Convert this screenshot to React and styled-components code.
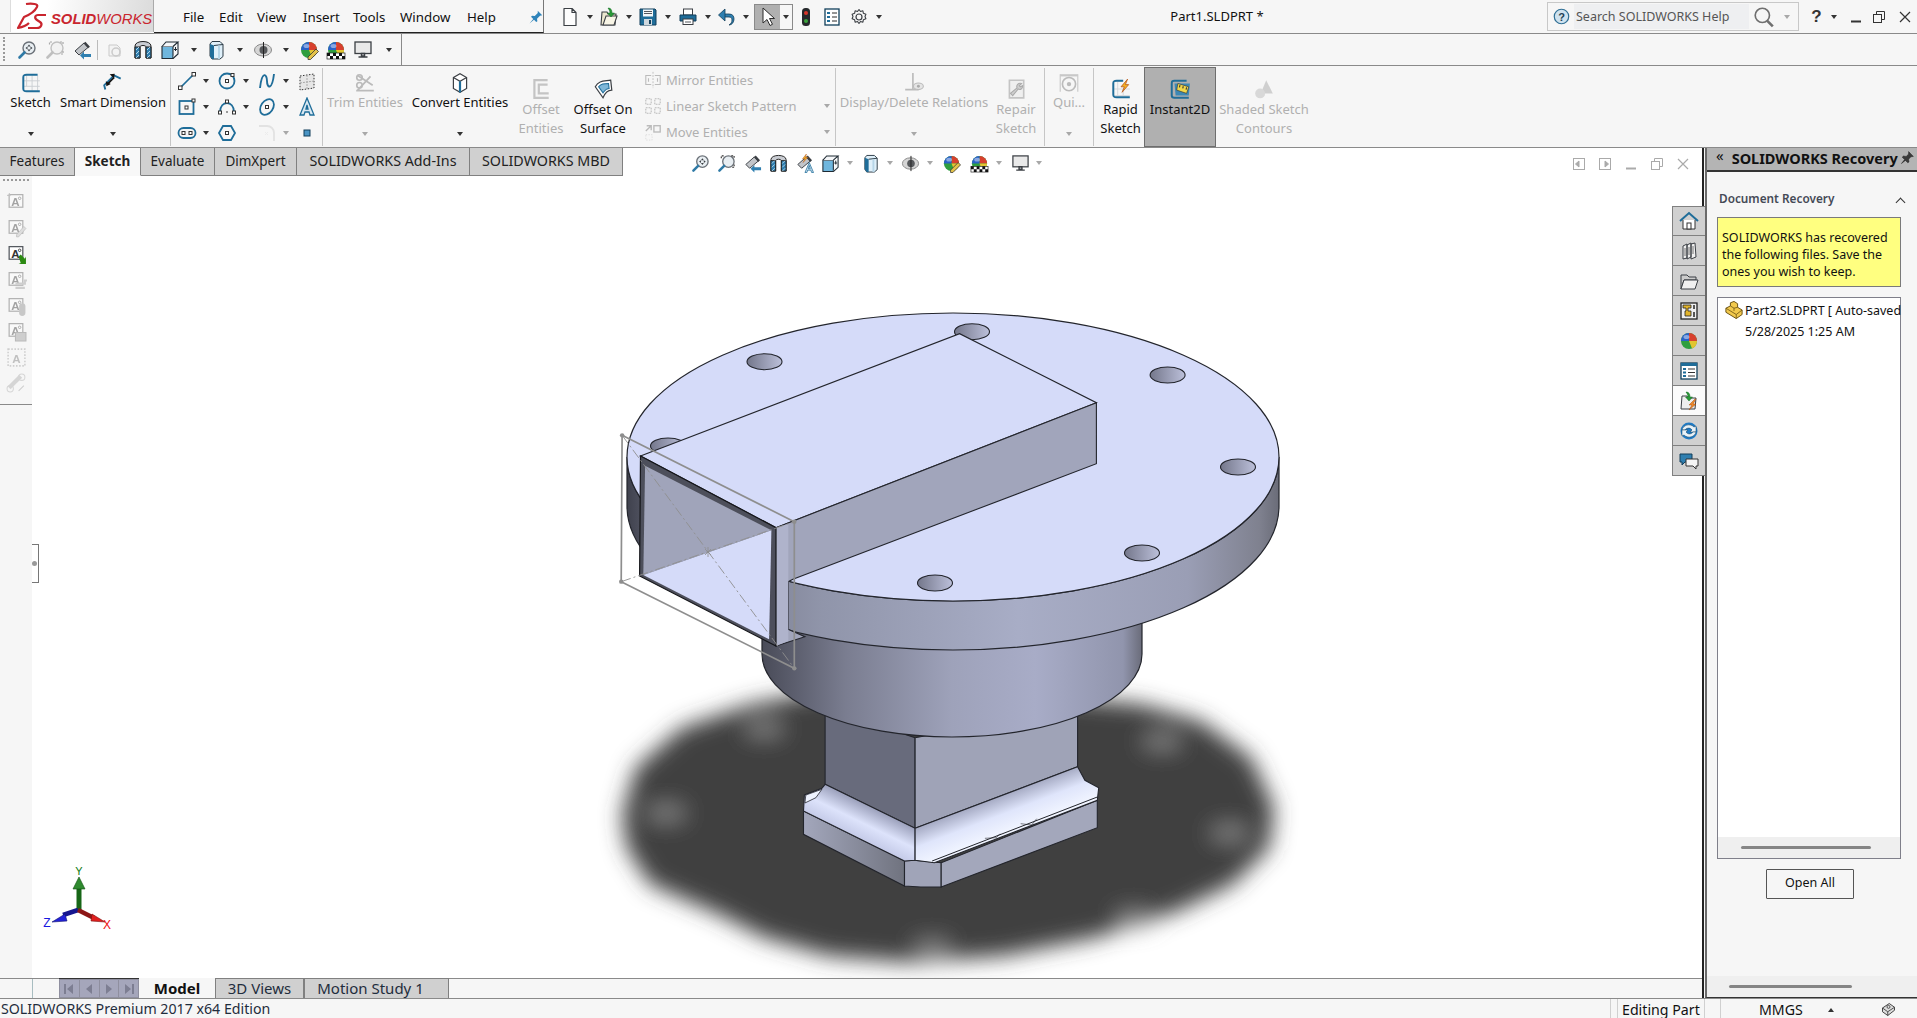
import React from 'react'
import styled, { createGlobalStyle } from 'styled-components'

const UI = '"Noto Sans", "Open Sans", sans-serif'

const Global = createGlobalStyle`
  html, body { margin: 0; padding: 0; background: #f6f6f6; }
  #root { width: 1917px; height: 1018px; overflow: hidden; }
`

const Shell = styled.div`
  width: 1917px;
  height: 1018px;
  display: flex;
  flex-direction: column;
  background: #f6f6f6;
  font-family: ${UI};
  font-size: 13px;
  color: #111;
  overflow: hidden;
`

/* ---------- icons ---------- */
const BL = '#1f6d99'

const Ic = ({ n, s = 20 }) => (
  <svg width={s} height={s} viewBox="0 0 20 20" fill="none" style={{ display: 'block' }}>
    {icons[n]}
  </svg>
)

const ball = (
  <>
    <circle cx="10" cy="10" r="8" fill="#2f9e3f" />
    <path d="M10 10V2a8 8 0 0 1 8 8z" fill="#d8402e" />
    <path d="M2 10a8 8 0 0 1 8-8v8z" fill="#2a62c8" />
    <path d="M10 10l8 0a8 8 0 0 1-5 7.400z" fill="#e2c430" />
    <ellipse cx="7.500" cy="6" rx="3" ry="2" fill="#fff" opacity=".45" />
  </>
)

const magnifier = (
  <>
    <circle cx="12" cy="8" r="6" fill="#e8eef2" stroke="#6b7178" strokeWidth="1.400" />
    <path d="M7.500 12.500L2.500 17.500" stroke="#2f7aa6" strokeWidth="2.600" strokeLinecap="round" />
  </>
)

const docA = (extra) => (
  <>
    <rect x="3" y="2.500" width="13" height="12" fill="#fff" stroke="#55595f" strokeWidth="1.200" />
    <text x="5" y="13" fontFamily="Liberation Sans, sans-serif" fontWeight="700" fontSize="11" fill="#333">A</text>
    <circle cx="13" cy="6" r="1.200" stroke="#333" strokeWidth=".8" />
    {extra}
  </>
)

const telescope = (
  <>
    <path d="M3 11L12 3l4 4.500-9 7.500z" fill="#c2c5c9" stroke="#3b3f44" />
    <path d="M12.500 2.500l4.500 5" stroke="#3b3f44" strokeWidth="2.500" />
  </>
)

const icons = {
  ball,
  newDoc: <path d="M4 1.500h8l4 4v13H4z M12 1.500v4h4" fill="#fdfdfd" stroke="#3b3f44" strokeWidth="1.200" strokeLinejoin="round" />,
  open: (
    <>
      <path d="M2 18l1-13h5l1 2h8l-1 11z" fill="#ece7cf" stroke="#3b3f44" strokeWidth="1.100" />
      <path d="M4 18l3-9h11l-3 9z" fill="#f8f5e6" stroke="#3b3f44" strokeWidth="1.100" />
      <path d="M9 1c3 0 4 2 4 5h2.500l-3.500 4-3.500-4H11c0-1.500-.6-3-2-5z" fill="#2a9a38" stroke="#136b22" strokeWidth=".5" />
    </>
  ),
  save: (
    <>
      <path d="M2 2h15l1 1v15H2z" fill="#1f6d99" stroke="#123f5b" />
      <rect x="5" y="2.500" width="10" height="7" fill="#f4f7f9" />
      <path d="M6 4.500h8M6 6.500h8" stroke="#55595f" />
      <rect x="6" y="12" width="8" height="6" fill="#cfd8de" />
      <rect x="11" y="13" width="2" height="4" fill="#123f5b" />
    </>
  ),
  print: (
    <>
      <rect x="5.500" y="2" width="9" height="6" fill="#fff" stroke="#3b3f44" />
      <path d="M2 8h16v6H2z" fill={BL} stroke="#123f5b" />
      <rect x="5" y="12" width="10" height="5.500" fill="#fff" stroke="#3b3f44" />
      <path d="M7 15h6" stroke="#55595f" />
    </>
  ),
  undo: (
    <>
      <path d="M7 7h5c3.500 0 5 2 5 5s-2 6-5 6c2-1 3-3 3-5s-1-3-3-3H7z" fill="#2f7fb0" stroke="#123f5b" strokeWidth=".8" />
      <path d="M8 2v12L1.500 8z" fill="#2f7fb0" stroke="#123f5b" strokeWidth=".8" />
    </>
  ),
  cursor: <path d="M5 1v15l4-3.500 3 6 2.500-1.200-3-5.800h5z" fill="#fff" stroke="#2b2b2b" strokeWidth="1" strokeLinejoin="round" />,
  light: (
    <>
      <rect x="6" y="1" width="8" height="18" rx="3.500" fill="#26292c" />
      <circle cx="10" cy="6" r="2" fill="#d8352a" />
      <circle cx="10" cy="14" r="2" fill="#3ba33c" />
    </>
  ),
  props: (
    <>
      <rect x="3" y="2" width="14" height="16" fill="#fff" stroke="#123f5b" strokeWidth="1.300" />
      <path d="M5 5h3v2H5zM5 9h3v2H5zM5 13h3v2H5z" fill={BL} />
      <path d="M10 6h5M10 10h5M10 14h5" stroke="#2b2b2b" />
    </>
  ),
  gear: (
    <>
      <circle cx="10" cy="10" r="3" stroke="#3b3f44" strokeWidth="1.200" />
      <path d="M10 2.500l1.500 2 2.400-.7.500 2.500 2.500.9-.9 2.300.9 2.300-2.500.9-.5 2.500-2.400-.7-1.500 2-1.500-2-2.400.7-.5-2.500-2.500-.9.900-2.300-.9-2.300 2.500-.9.500-2.500 2.400.7z" stroke="#3b3f44" strokeWidth="1.100" strokeLinejoin="round" />
    </>
  ),
  zoomFit: (
    <>
      {magnifier}
      <path d="M12 4.500l-1.500 2h3zM12 11.500l-1.500-2h3zM8.500 8l2-1.500v3zM15.500 8l-2-1.500v3z" fill="#3b3f44" />
    </>
  ),
  zoomArea: (
    <>
      {magnifier}
      <path d="M7 2H4.500v2.500M15 2h3v3M18 11v3h-3" stroke="#333" strokeWidth="1.200" strokeDasharray="2 1" />
    </>
  ),
  prevView: (
    <>
      {telescope}
      <path d="M19 14h-7v-2.500L8 15.500l4 4V17h7z" fill="#2f7fb0" />
    </>
  ),
  hudA: (
    <>
      {telescope}
      <path d="M12 0L8 5h2.500L8.500 9l5-5.500H11z" fill="#f4b223" stroke="#b5531a" strokeWidth=".5" />
      <path d="M15 9l-4.500 10.500h2l.8-2.500h3.400l.8 2.500h2zM14 15.500l1-3.500 1 3.500z" fill="#cfe4f1" stroke={BL} strokeWidth=".8" />
    </>
  ),
  rebuild: (
    <>
      <path d="M4 5h8l3 3v8H4z" fill="#eee" stroke="#888" />
      <circle cx="11" cy="12" r="4" stroke="#888" strokeWidth="1.500" />
    </>
  ),
  section: (
    <>
      <path d="M2 18V6c0-6 16-6 16 0v12h-5V7c0-2-6-2-6 0v11z" fill="#c9ccd2" stroke="#222" />
      <path d="M2 7h5v11H2zM13 7h5v11h-5z" fill="#2f7fb0" stroke="#222" />
      <path d="M3 10l3-3M3 14l3-3M3 18l3-3M14 10l3-3M14 14l3-3M14 18l3-3" stroke="#d5eaf6" strokeWidth=".8" />
    </>
  ),
  cubeArrows: (
    <>
      <path d="M2 6.500h11v12H2z" fill="#6fb6dd" stroke="#1f2a33" strokeWidth="1.100" />
      <path d="M2 6.500L6 2h12l-5 4.500M18 2v12l-5 4.500" fill="#f4f6f8" stroke="#1f2a33" strokeWidth="1.100" />
      <path d="M15.500 7v4M14 9.500h3" stroke="#1f2a33" />
    </>
  ),
  cube: (
    <>
      <path d="M5 1.500h8l3 3v12l-3 2.500H5l-2-3V4z" fill="#dff0fa" stroke="#2b3a45" strokeWidth="1" />
      <path d="M3 4l4 1.500V19H5l-2-3z" fill={BL} />
      <path d="M7 5.500L16 4.500" stroke="#2b3a45" />
      <path d="M12 5.500V19" stroke="#b6d6e8" strokeWidth="2" />
    </>
  ),
  eye: (
    <>
      <ellipse cx="10" cy="10" rx="8.500" ry="6" fill="#d5d5d5" stroke="#888" />
      <circle cx="10.500" cy="10" r="4" fill="#57595c" />
      <path d="M10.500 2v16" stroke="#222" />
    </>
  ),
  appearance: (
    <>
      {ball}
      <path d="M17 9l2.500 2.500-8 8H9v-2.500z" fill="#e5c34a" stroke="#333" strokeWidth=".8" />
    </>
  ),
  scene: (
    <>
      {ball}
      <rect x="1" y="13" width="18" height="6" fill="#fff" stroke="#222" strokeWidth=".7" />
      <path d="M1 13h3v3H1zM7 13h3v3H7zM13 13h3v3h-3zM4 16h3v3H4zM10 16h3v3h-3zM16 16h3v3h-3z" fill="#111" />
    </>
  ),
  monitor: (
    <>
      <rect x="2" y="2" width="16" height="11.500" fill="#e9e9e9" stroke="#3b3f44" strokeWidth="1.300" />
      <path d="M8.500 13.500h3V16h-3zM5.500 17h9" stroke="#3b3f44" strokeWidth="1.500" />
    </>
  ),
  sketch: (
    <>
      <path d="M6 3v10M11 3v14M16 3v14M3 8h15M3 13h15" stroke="#c9cdd2" strokeWidth=".8" />
      <path d="M16 2.500H6C3.500 2.500 3 3 3 5v10c0 2 .5 2.500 3 2.500h12" stroke={BL} strokeWidth="1.800" />
    </>
  ),
  smartDim: (
    <>
      <path d="M3 16l-1-4 9-9 6 3" stroke={BL} strokeWidth="1.700" />
      <path d="M5 11l6-6" stroke="#111" strokeWidth="1.600" />
      <path d="M11.500 2.500l-.5 4.500-4-4zM3.500 9.500l4.500 2.500-4 2z" fill="#111" transform="translate(0 -1)" />
    </>
  ),
  line: (
    <>
      <path d="M4 16L16 4" stroke={BL} strokeWidth="1.700" />
      <rect x="1.500" y="15" width="3.500" height="3.500" fill="#fff" stroke="#333" />
      <rect x="15" y="1.500" width="3.500" height="3.500" fill="#fff" stroke="#333" />
    </>
  ),
  circle: (
    <>
      <circle cx="10" cy="10" r="7.500" stroke={BL} strokeWidth="1.800" />
      <rect x="8.500" y="8.500" width="3" height="3" fill="#fff" stroke="#333" />
      <rect x="14" y="2.500" width="3" height="3" fill="#fff" stroke="#333" />
    </>
  ),
  spline: <path d="M3 17c2-18 7-14 7-7s5 10 7-7" stroke={BL} strokeWidth="1.900" />,
  dashBox: (
    <>
      <path d="M3 5l14-2v14l-14 2z" fill="#e6e6e6" stroke="#333" strokeDasharray="1.500 1.500" />
      <path d="M10 4v14M3 12l14-2" stroke="#aaa" strokeDasharray="2 1" />
    </>
  ),
  rect: (
    <>
      <rect x="2.500" y="4" width="14" height="13" stroke={BL} strokeWidth="1.800" />
      <rect x="8" y="9" width="3" height="3" fill="#fff" stroke="#333" />
      <rect x="15" y="2" width="3" height="3" fill="#fff" stroke="#333" />
    </>
  ),
  arc: (
    <>
      <path d="M3 15c0-12 14-12 14 0" stroke={BL} strokeWidth="1.800" />
      <rect x="8.500" y="3" width="3" height="3" fill="#fff" stroke="#333" />
      <rect x="1.500" y="14" width="3" height="3" fill="#fff" stroke="#333" />
      <rect x="15.500" y="14" width="3" height="3" fill="#fff" stroke="#333" />
      <path d="M9 14l2 2M11 14l-2 2" stroke="#999" />
    </>
  ),
  ellipse: (
    <>
      <ellipse cx="10" cy="10" rx="6" ry="8.500" transform="rotate(35 10 10)" stroke={BL} strokeWidth="1.800" />
      <rect x="8.500" y="8.500" width="3" height="3" fill="#fff" stroke="#333" />
    </>
  ),
  textA: <path d="M10 1L3 18h4l1-3h4l1 3h4zM9 12l1-4 1 4z" fill="#d9e8f2" stroke={BL} strokeWidth="1.300" />,
  slot: (
    <>
      <rect x="1.500" y="5" width="17" height="10" rx="5" stroke={BL} strokeWidth="1.800" />
      <rect x="5" y="8.500" width="3" height="3" fill="#fff" stroke="#333" />
      <rect x="12" y="8.500" width="3" height="3" fill="#fff" stroke="#333" />
    </>
  ),
  polygon: (
    <>
      <path d="M6 3h8l4 7-4 7H6l-4-7z" stroke={BL} strokeWidth="1.800" />
      <rect x="8.500" y="8.500" width="3" height="3" fill="#fff" stroke="#333" />
    </>
  ),
  fillet: (
    <>
      <path d="M2 3h8c4 0 7 3 7 7v8" stroke="#c4c4c4" strokeWidth="1.800" />
      <path d="M8 9l3 3M11 9l-3 3" stroke="#ddd" />
    </>
  ),
  point: <rect x="7" y="7" width="6" height="6" fill="#4a94c4" stroke="#123f5b" />,
  trim: (
    <>
      <path d="M3 3l14 9M3 17L15 4M2 17h16" stroke="#bbb" strokeWidth="1.600" />
      <circle cx="5" cy="5" r="2.500" stroke="#bbb" strokeWidth="1.500" />
      <circle cx="5" cy="12" r="2.500" stroke="#bbb" strokeWidth="1.500" />
    </>
  ),
  convert: (
    <>
      <path d="M4 5l6-3.500L16 5v10l-6 3.500L4 15z" fill="#fff" stroke="#3b3f44" strokeWidth="1.100" />
      <path d="M4 5l6 3.500L16 5M10 8.500v10" stroke="#3b3f44" strokeWidth="1.100" />
      <path d="M10 8.500v10" stroke={BL} strokeWidth="2" />
    </>
  ),
  offset: <path d="M16 2H4v16h13M16 6H8v8h9" stroke="#c4c4c4" strokeWidth="2" />,
  offsetSurface: (
    <>
      <path d="M3 8c3-6 8-5 14-6l1 9c-4 0-6 2-8 7z" fill="#fff" stroke="#3b3f44" strokeWidth="1.100" />
      <path d="M6 8c2-3 5-3 9-3l.500 4.500c-3 0-4 2-5.500 4z" fill="#7fb7d8" stroke={BL} />
    </>
  ),
  mirror: (
    <>
      <path d="M10 1v18" stroke="#bbb" strokeDasharray="2 1.500" />
      <path d="M8 5H2v10h6M12 5h6v10h-6M5 8v4M15 8v4" stroke="#bbb" strokeWidth="1.200" />
    </>
  ),
  linear: <path d="M2 2h6v6H2zM12 2h6v6h-6zM2 12h6v6H2zM12 12h6v6h-6z" stroke="#bbb" strokeWidth="1.200" strokeDasharray="2 1" />,
  move: (
    <>
      <path d="M2 9l6-6M3 3h5v5" stroke="#bbb" strokeWidth="1.500" />
      <rect x="11" y="3" width="7" height="7" stroke="#bbb" strokeWidth="1.500" />
      <path d="M2 13h7v6H2z" stroke="#ddd" strokeDasharray="1.500 1.500" />
    </>
  ),
  relations: (
    <>
      <path d="M9 1v15M2 16h12" stroke="#bbb" strokeWidth="1.500" />
      <ellipse cx="14" cy="13" rx="4.500" ry="3" fill="#e5e5e5" stroke="#bbb" />
      <circle cx="14" cy="13" r="1.300" fill="#aaa" />
    </>
  ),
  repair: (
    <>
      <path d="M4 2h13v16H4z" fill="#efefef" stroke="#c4c4c4" strokeWidth="1.500" />
      <path d="M15 5l-2 2 1 1 2-1c0 3-2 4-4 3l-5 6-2-2 6-5c-1-2 1-5 4-4z" fill="#cfcfcf" stroke="#aaa" />
    </>
  ),
  quick: (
    <>
      <path d="M2 2h16v2H2z" fill="#c8c8c8" />
      <path d="M2 2v16M18 2v16" stroke="#c8c8c8" />
      <circle cx="10" cy="11" r="6" stroke="#bbb" strokeWidth="1.500" />
      <circle cx="10" cy="11" r="2" fill="#bbb" />
    </>
  ),
  rapid: (
    <>
      <path d="M3 3v13h15M3 3h8M7 3v13M12 10v6M3 10h15" stroke="#d0d4d8" strokeWidth=".8" />
      <path d="M12 2.500H6C3.500 2.500 3 3 3 5v10c0 2 .5 2.500 3 2.500h12" stroke={BL} strokeWidth="1.800" />
      <path d="M16 1l-6 7h3l-2 5 6-7h-3z" fill="#f4b223" stroke="#b5531a" strokeWidth=".7" />
    </>
  ),
  instant: (
    <>
      <path d="M16 2.500H5C3 2.500 2.500 3 2.500 5v11c0 1.500.5 2 2.500 2h13" stroke={BL} strokeWidth="1.800" />
      <path d="M5 5h14l-1 11H6z" fill="#3d88b5" />
      <path d="M8 5l10 3-2 6-9-3z" fill="#f2d84a" stroke="#333" strokeWidth=".6" />
      <path d="M10 6.500l-.5 2M13 7.500l-.5 2M16 8.500l-.5 2" stroke="#333" />
    </>
  ),
  shaded: (
    <>
      <path d="M12 2l6 12H7z" fill="#cfcfcf" />
      <circle cx="6.500" cy="14" r="4.500" fill="#d8d8d8" />
    </>
  ),
  pin: <path d="M13 1l6 6-3 .5-4 4 .5 3.500-1.500 1-3-3-6 5 5-6-3-3 1.500-1.500 3.500.5 4-4z" fill="#2f84ba" />,
  blackPin: <path d="M12 2l6 6-3 .5-3 3 .5 3.500-1.500 1-3-3-5 4 4-5-3-3 1.500-1.500 3.500.5 3-3z" fill="#3a3a3a" stroke="#111" strokeWidth=".5" />,
  helpCircle: (
    <>
      <circle cx="10" cy="10" r="8.500" fill="#cfe2ee" stroke="#2f6f95" strokeWidth="1.400" />
      <text x="10" y="15" textAnchor="middle" fontFamily="Liberation Sans, sans-serif" fontWeight="700" fontSize="13" fill="#1f3f55">?</text>
    </>
  ),
  bigSearch: (
    <>
      <circle cx="8.500" cy="8.500" r="6.500" stroke="#6f6f6f" strokeWidth="1.500" />
      <path d="M13 13.500l5 5" stroke="#6f6f6f" strokeWidth="2.400" />
    </>
  ),
  part: (
    <>
      <path d="M1 8l5-2.500V2l4-1.500L14 3v4l5 3v5l-6.500 4.500L1 12.500z" fill="#f2c94c" stroke="#6d5414" strokeWidth="1.100" strokeLinejoin="round" />
      <path d="M6 5.500L10 8l4-1M1 8l11.500 7v4.500M12.500 15L19 10M10 8v3" stroke="#6d5414" strokeWidth=".9" />
    </>
  ),
  stamp: (
    <>
      <path d="M2 8l9-6 7 5v4l-9 7-7-5z" fill="#ddd" stroke="#333" strokeWidth="1.200" />
      <path d="M2 8l7 5 9-6M9 13v5" stroke="#333" strokeWidth="1.100" />
      <circle cx="10" cy="6.500" r="2" stroke="#333" />
    </>
  ),
  home: (
    <>
      <path d="M1 10l9-8 9 8" stroke="#1f6d99" strokeWidth="2" />
      <path d="M4 9v9h12V9" fill="#fff" stroke="#333" />
      <rect x="8" y="12" width="4" height="6" fill="#fff" stroke="#333" />
    </>
  ),
  books: (
    <>
      <path d="M4 5l4-2v14l-4 1zM8 4l4-2v14l-4 2zM12 3l4-1 1 14-5 2z" fill="#efefef" stroke="#3b3f44" />
      <path d="M6 7v8M10 6v8M14 5v8" stroke="#777" />
    </>
  ),
  folder: (
    <>
      <path d="M2 4h6l2 2h7v3H5L2 18z" fill="#ccc" stroke="#3b3f44" />
      <path d="M2 18l3-9h14l-3 9z" fill="#f0f0f0" stroke="#3b3f44" />
    </>
  ),
  layout: (
    <>
      <rect x="2" y="2" width="16" height="16" fill="#efefef" stroke="#222" strokeWidth="1.300" />
      <path d="M4 4h8v3H9v3h3v5H6v-5h1V7H4z" fill="#e2b42b" stroke="#222" strokeWidth=".8" />
      <path d="M14 4h2v4h-2zM14 11h2v5h-2z" fill="#555" />
    </>
  ),
  list: (
    <>
      <rect x="2" y="2" width="16" height="16" fill="#fff" stroke="#123f5b" strokeWidth="1.300" />
      <path d="M2 2h16v3H2z" fill={BL} />
      <path d="M4 7h3v2H4zM4 10.500h3v2H4zM4 14h3v2H4z" fill={BL} />
      <path d="M9 8h7M9 11.500h7M9 15h7" stroke="#333" />
    </>
  ),
  recover: (
    <>
      <path d="M2 18l1-13h5l1 2h8l-1 11z" fill="#eee" stroke="#3b3f44" />
      <path d="M7 1c3 0 4 2 4 5h2.500l-3.500 4-3.500-4H9c0-1.500-.6-3-2-5z" fill="#2a9a38" stroke="#136b22" strokeWidth=".5" />
      <path d="M16 8l-6 6h3l-3 5 7-6h-3l3-5z" fill="#f08b2a" stroke="#a34a10" strokeWidth=".5" />
    </>
  ),
  sync: (
    <>
      <circle cx="10" cy="10" r="8.500" fill="#1f7ac4" />
      <path d="M3 9c1-5 8-7 12-3l2-1v6h-6l2-2c-2-3-6-2-7 0z" fill="#e9f2f8" stroke="#123f5b" strokeWidth=".5" />
      <path d="M17 11c-1 5-8 7-12 3l-2 1V9h6l-2 2c2 3 6 2 7 0z" fill="#e9f2f8" stroke="#123f5b" strokeWidth=".5" />
    </>
  ),
  chat: (
    <>
      <path d="M1 3h12v8H6l-3 3v-3H1z" fill="#2f7fb0" stroke="#123f5b" />
      <path d="M7 8h12v7h-2v3l-3-3H7z" fill="#f4f4f4" stroke="#333" />
    </>
  ),
  annNew: docA(<path d="M3 1l1 3M1 3l3 .5" stroke="#777" />),
  annEdit: docA(<path d="M17 8l2 2-7 8h-2v-2z" fill="#bbb" stroke="#666" strokeWidth=".6" />),
  annImport: docA(<path d="M12 12l2-2 4 4 1-2v7h-7l2-1z" fill="#2c8a12" />),
  annAdd: docA(<path d="M9 13h9v-3h3M9 17h9" stroke="#999" strokeWidth="2" />),
  annLight: docA(<rect x="12.500" y="7" width="6" height="12" rx="3" fill="#888" />),
  annSave: docA(<path d="M9 11h10v8H9z" fill="#999" stroke="#666" />),
  annFrame: (
    <>
      <rect x="2" y="2" width="16" height="16" stroke="#999" strokeDasharray="1.500 1.500" strokeWidth="1.500" />
      <text x="6" y="15" fontFamily="Liberation Sans, sans-serif" fontWeight="700" fontSize="11" fill="#777">A</text>
    </>
  ),
  annLink: (
    <>
      <path d="M3 14L14 3" stroke="#aaa" strokeWidth="4" />
      <circle cx="4" cy="15" r="3" stroke="#aaa" />
      <circle cx="15" cy="4" r="3" stroke="#aaa" />
      <path d="M12 17l5-5" stroke="#999" />
    </>
  ),
}

/* ---------- shared small bits ---------- */
const IconSlot = styled.span`
  width: ${(p) => p.$w || 26}px;
  flex: none;
  display: flex;
  justify-content: center;
  align-items: center;
  ${(p) => p.$off && 'filter: grayscale(1) opacity(.4);'}
`

const Caret = styled.span`
  width: ${(p) => p.$w || 14}px;
  flex: none;
  display: flex;
  justify-content: center;
  &::after {
    content: '';
    border-left: 3.500px solid transparent;
    border-right: 3.500px solid transparent;
    border-top: 4px solid ${(p) => (p.$off ? '#a8a8a8' : '#333')};
  }
`

/* ---------- title bar ---------- */
const TitleBar = styled.header`
  height: 33px;
  flex: none;
  display: flex;
  border-bottom: 1px solid #8a8a8a;
`

const LogoBox = styled.div`
  width: 144px;
  height: 32px;
  margin-left: 10px;
  flex: none;
  display: flex;
  align-items: center;
  box-sizing: border-box;
  border-left: 1px solid #ddd;
  border-right: 1px solid #aaa;
  background: linear-gradient(100deg, #fff 25%, #dadada 100%);
`

const LogoWord = styled.span`
  font-family: "Liberation Sans", Arial, sans-serif;
  font-style: italic;
  font-size: 14.800px;
  color: #c9252e;
  margin: 5px 0 0 5px;
  white-space: nowrap;
  b { font-weight: 700; }
`

const MenuBar = styled.nav`
  width: 390px;
  box-sizing: border-box;
  flex: none;
  height: 33px;
  margin-bottom: -1px;
  padding-top: 2px;
  display: flex;
  align-items: center;
  border-bottom: 1px solid #222;
  border-right: 1px solid #777;
`

const MenuItem = styled.span`
  width: ${(p) => p.$w}px;
  font-size: 13.300px;
  color: #111;
  flex: none;
`

const QuickBar = styled.div`
  display: flex;
  align-items: center;
  padding-left: 16px;
  flex: none;
`

const SelectBox = styled.div`
  display: flex;
  height: 26px;
  margin: 0 2px 0 0;
  border: 1px solid #8a8a8a;
  box-sizing: border-box;
`

const SelectOn = styled.div`
  width: 25px;
  background: #b0b0b0;
  display: flex;
  align-items: center;
  justify-content: center;
`

const SelectCaret = styled(Caret)`
  align-self: center;
`

const DocTitle = styled.div`
  flex: 1;
  text-align: center;
  font-size: 13px;
  line-height: 33px;
`

const SearchBox = styled.div`
  width: 252px;
  height: 29px;
  margin-top: 2px;
  box-sizing: border-box;
  border: 1px solid #c8c8c8;
  display: flex;
  align-items: center;
  flex: none;
`

const SearchInput = styled.div`
  width: 175px;
  height: 25px;
  background: #eeeff1;
  color: #555;
  font-size: 12.500px;
  line-height: 25px;
  padding-left: 2px;
  box-sizing: border-box;
  white-space: nowrap;
`

const WinControls = styled.div`
  display: flex;
  align-items: center;
  width: 118px;
  flex: none;
  padding-left: 12px;
  box-sizing: border-box;
`

const WinGlyph = styled.span`
  width: ${(p) => p.$w || 26}px;
  flex: none;
  text-align: center;
  color: #333;
  font-family: "Liberation Sans", sans-serif;
  font-size: 17px;
  font-weight: 700;
`

const WinIcon = ({ kind, c = '#333', w = 26 }) => (
  <IconSlot $w={w}>
    <svg width="14" height="14" viewBox="0 0 14 14" fill="none" stroke={c}>
      {kind === 'min' && <path d="M2 11.500h10" strokeWidth="2" />}
      {kind === 'max' && (
        <>
          <rect x="1.500" y="4.500" width="8" height="8" />
          <path d="M4.500 4V1.500h8v8H10" />
        </>
      )}
      {kind === 'x' && <path d="M2 2l10 10M12 2L2 12" strokeWidth="1.200" />}
      {kind === 'prev' && (
        <>
          <rect x="1.500" y="1.500" width="11" height="11" />
          <path d="M7 4v6L3.500 7z" fill={c} />
        </>
      )}
      {kind === 'next' && (
        <>
          <rect x="1.500" y="1.500" width="11" height="11" />
          <path d="M7 4v6l3.500-3z" fill={c} />
        </>
      )}
    </svg>
  </IconSlot>
)

/* ---------- view toolbar ---------- */
const ViewBar = styled.div`
  height: 31px;
  flex: none;
  display: flex;
  border-bottom: 1px solid #8a8a8a;
`

const ViewTools = styled.div`
  width: 402px;
  flex: none;
  display: flex;
  align-items: center;
  box-sizing: border-box;
  padding-left: 13px;
  border-right: 1px solid #8a8a8a;
`

const ToolSep = styled.span`
  width: 1px;
  height: 20px;
  background: #bbb;
  flex: none;
  margin: 0 3px;
`

const Grip = styled.span`
  position: absolute;
  left: 3px;
  top: 37px;
  height: 24px;
  border-left: 2px dotted #999;
`

/* ---------- ribbon ---------- */
const Ribbon = styled.div`
  height: 81px;
  flex: none;
  display: flex;
  border-bottom: 1px solid #8a8a8a;
  padding-left: 3px;
`

const Cmd = styled.div`
  width: ${(p) => p.$w}px;
  flex: none;
  height: 78px;
  margin-top: 2px;
  box-sizing: border-box;
  display: flex;
  flex-direction: column;
  align-items: center;
  position: relative;
  color: ${(p) => (p.$off ? '#b0b0b0' : '#111')};
  background: ${(p) => (p.$on ? '#b0b0b0' : 'transparent')};
  outline: ${(p) => (p.$on ? '1px solid #6e6e6e' : 'none')};
  font-size: 13px;
  line-height: 19px;
  text-align: center;
  white-space: nowrap;
`

const CmdIcon = styled.div`
  margin-top: ${(p) => (p.$two ? 10 : 4)}px;
  height: 22px;
`

const CmdLabel = styled.div`
  margin-top: ${(p) => (p.$two ? 0 : -1)}px;
`

const CmdCaret = styled(Caret)`
  position: absolute;
  bottom: 10px;
  left: 50%;
  margin-left: -7px;
`

const RibbonSep = styled.span`
  width: 1px;
  height: 78px;
  margin: 2px 2px 0;
  flex: none;
  background: #c6c6c6;
`

const ToolGrid = styled.div`
  display: grid;
  grid-template-columns: 40px 40px 40px 23px;
  grid-auto-rows: 26px;
  flex: none;
  margin: 2px 0 0 4px;
`

const GridCell = styled.div`
  display: flex;
  align-items: center;
`

const SmallList = styled.div`
  width: 193px;
  flex: none;
  margin: 1px 0 0 1px;
  color: #b0b0b0;
`

const SmallRow = styled.div`
  height: 26px;
  display: flex;
  align-items: center;
  white-space: nowrap;
  font-size: 13px;
`

const RowIcon = styled.span`
  width: 26px;
  flex: none;
  display: flex;
  justify-content: center;
`

const RowText = styled.span`
  flex: 1;
`

const Cmd2 = ({ w, icon, lines, off, on, caret, two }) => (
  <Cmd $w={w} $off={off} $on={on}>
    <CmdIcon $two={two}>
      <Ic n={icon} s={22} />
    </CmdIcon>
    {lines.map((l) => (
      <CmdLabel key={l} $two={two}>{l}</CmdLabel>
    ))}
    {caret && <CmdCaret $off={off} />}
  </Cmd>
)

/* ---------- main area ---------- */
const Main = styled.div`
  flex: 1;
  display: flex;
  min-height: 0;
`

const Work = styled.div`
  flex: 1;
  min-width: 0;
  display: flex;
  flex-direction: column;
`

const TabRow = styled.div`
  height: 28px;
  flex: none;
  display: flex;
  background: #fff;
`

const CmTab = styled.div`
  width: ${(p) => p.$w}px;
  box-sizing: border-box;
  flex: none;
  text-align: center;
  font-size: ${(p) => (p.$caps ? 14.300 : 13.500)}px;
  line-height: 26px;
  color: #222;
  white-space: nowrap;
  background: ${(p) => (p.$on ? '#f8f8f8' : '#d0d0d0')};
  font-weight: ${(p) => (p.$on ? 700 : 400)};
  border-right: 1px solid #808080;
  border-bottom: ${(p) => (p.$on ? '1px solid #f8f8f8' : '1px solid #808080')};
`

const Hud = styled.div`
  display: flex;
  align-items: center;
  margin-left: 64px;
  padding-top: 2px;
`

const DocControls = styled.div`
  margin-left: auto;
  margin-right: 6px;
  padding-top: 4px;
  display: flex;
  align-items: center;
`

const ViewRow = styled.div`
  flex: 1;
  min-height: 0;
  display: flex;
`

const FeatureRail = styled.aside`
  width: 32px;
  flex: none;
  background: #f6f6f6;
  position: relative;
`

const RailGrip = styled.div`
  height: 9px;
  margin: 0 3px;
  border-top: 2px dotted #999;
  transform: translateY(3px);
`

const RailTools = styled.div`
  height: 218px;
  padding-top: 3px;
  box-sizing: border-box;
  display: flex;
  flex-direction: column;
  align-items: center;
  gap: .9px;
  border-bottom: 1px solid #8a8a8a;
`

const RailIcon = styled.div`
  height: 25px;
  display: flex;
  align-items: center;
  ${(p) => !p.$on && 'opacity: .42; filter: grayscale(1);'}
`

const Handle = styled.div`
  position: absolute;
  left: 32px;
  top: 368px;
  width: 7px;
  height: 39px;
  box-sizing: border-box;
  border: 1px solid #777;
  border-left: none;
  background: #fff;
  z-index: 2;
  &::after {
    content: '';
    position: absolute;
    top: 16px;
    left: 0;
    width: 5px;
    height: 5px;
    border-radius: 50%;
    background: #999;
  }
`

const Viewport = styled.div`
  flex: 1;
  min-width: 0;
  position: relative;
  background: #fff;
`

const Canvas = styled.svg`
  position: absolute;
  left: 0;
  top: 0;
  display: block;
`

const PaneTabs = styled.div`
  position: absolute;
  right: -3px;
  top: 30px;
  width: 33px;
  display: flex;
  flex-direction: column;
  z-index: 2;
`

const PaneTab = styled.div`
  height: 30px;
  box-sizing: border-box;
  display: flex;
  align-items: center;
  justify-content: center;
  background: ${(p) => (p.$on ? '#fbfbfb' : '#d0d0d0')};
  border: 1px solid #808080;
  border-right: none;
  border-top: ${(p) => (p.$first ? '1px solid #808080' : 'none')};
`

const BottomTabs = styled.div`
  height: 19px;
  flex: none;
  display: flex;
  background: #f6f6f6;
  border-top: 1px solid #8a8a8a;
  padding-left: 59px;
  position: relative;
  &::before {
    content: '';
    position: absolute;
    left: 32px;
    top: 0;
    bottom: 0;
    width: 1px;
    background: #a7bcc0;
  }
`

const NavButtons = styled.div`
  width: 80px;
  flex: none;
  display: flex;
  gap: 1px;
  padding: 1px;
  box-sizing: border-box;
  background: #8f8f9f;
  margin-top: -1px;
  height: 20px;
  border-top: 1px solid #333;
`

const NavButton = styled.span`
  flex: 1;
  background: #a5a6bb;
  display: flex;
  align-items: center;
  justify-content: center;
`

const NavGlyph = ({ d }) => (
  <svg width="10" height="12" viewBox="0 0 10 12" fill="#7d7e92">
    <path d={d} />
  </svg>
)

const ModelTab = styled.div`
  width: ${(p) => p.$w}px;
  flex: none;
  box-sizing: border-box;
  text-align: center;
  font-size: 15px;
  line-height: 19px;
  margin-top: -1px;
  height: 20px;
  padding-right: ${(p) => p.$shift || 0}px;
  white-space: nowrap;
  color: ${(p) => (p.$on ? '#111' : '#1f2d3d')};
  font-weight: ${(p) => (p.$on ? 700 : 400)};
  background: ${(p) => (p.$on ? '#f6f6f6' : '#d0d0d0')};
  border-right: ${(p) => (p.$on ? 'none' : '1px solid #808080')};
  border-left: ${(p) => (p.$on ? 'none' : '1px solid #808080')};
  border-top: ${(p) => (p.$on ? '1px solid #f6f6f6' : '1px solid #808080')};
`

/* ---------- recovery panel ---------- */
const Panel = styled.aside`
  width: 215px;
  flex: none;
  box-sizing: border-box;
  display: flex;
  flex-direction: column;
  border-left: 2px solid #222;
  background: #f6f6f6;
  position: relative;
`

const PanelInner = styled.div`
  flex: 1;
  min-height: 0;
  margin-left: 1px;
  border-left: 2px solid #6a6a6a;
  border-bottom: 1px solid #333;
  display: flex;
  flex-direction: column;
`

const PanelHead = styled.div`
  height: 24px;
  box-sizing: border-box;
  flex: none;
  display: flex;
  align-items: center;
  background: #b4b4b4;
  border-bottom: 2px solid #333;
  font-size: 14.500px;
  line-height: 19px;
  font-weight: 700;
  color: #111;
  padding: 0 0 2px 9px;
  white-space: nowrap;
`

const PanelChevrons = styled.span`
  font-size: 15px;
  font-weight: 400;
  margin-right: 8px;
  line-height: 15px;
  margin-top: -6px;
`

const SectionHead = styled.div`
  margin: 18px 10px 0 12px;
  height: 16px;
  display: flex;
  justify-content: space-between;
  align-items: center;
  font-size: 11.800px;
  font-weight: 600;
  color: #454a56;
`

const Chevron = styled.span`
  width: 6px;
  height: 6px;
  border-left: 1.500px solid #333;
  border-top: 1.500px solid #333;
  transform: rotate(45deg);
  margin: 8px 3px 0 0;
`

const Notice = styled.div`
  margin: 11px 16px 0 10px;
  height: 70px;
  box-sizing: border-box;
  padding: 11px 0 0 4px;
  background: #ffff80;
  border: 1px solid #7a7a7a;
  font-size: 12.500px;
  line-height: 17px;
  color: #111;
  white-space: nowrap;
`

const FileList = styled.div`
  margin: 10px 16px 0 10px;
  height: 562px;
  flex: none;
  box-sizing: border-box;
  background: #fff;
  border: 1px solid #7f7f8a;
  display: flex;
  flex-direction: column;
`

const FileRow = styled.div`
  display: flex;
  align-items: center;
  height: 24px;
  font-size: 12.500px;
  white-space: nowrap;
  padding-left: 5px;
`

const FileDate = styled.div`
  font-size: 12.500px;
  padding-left: 27px;
  line-height: 21px;
  margin-top: -1px;
  flex: 1;
`

const HScroll = styled.div`
  height: 21px;
  flex: none;
  background: #efefef;
  display: flex;
  align-items: center;
  padding-left: ${(p) => p.$pad}px;
  &::after {
    content: '';
    width: ${(p) => p.$thumb}px;
    height: 3px;
    border-radius: 2px;
    background: #858585;
  }
`

const OpenAll = styled.div`
  width: 88px;
  height: 30px;
  margin: 10px 0 0 59px;
  flex: none;
  box-sizing: border-box;
  border: 1px solid #555;
  border-radius: 1px;
  text-align: center;
  font-size: 12.500px;
  line-height: 25px;
`

const PanelFill = styled.div`
  flex: 1;
`

/* ---------- status bar ---------- */
const StatusBar = styled.footer`
  height: 20px;
  flex: none;
  display: flex;
  background: #f6f6f6;
  border-top: 1px solid #8a8a8a;
  box-sizing: border-box;
  font-size: 14.200px;
  line-height: 15px;
  white-space: nowrap;
`

const StatusText = styled.span`
  flex: 1;
  padding: 2px 0 0 1px;
  color: #1f2d3d;
`

const StatusCell = styled.span`
  width: ${(p) => p.$w}px;
  flex: none;
  box-sizing: border-box;
  border-left: 1px solid #d0d0d0;
  padding: 2px 0 0 ${(p) => p.$pad || 0}px;
  display: flex;
  align-items: center;
`

const UpCaret = styled(Caret)`
  transform: rotate(180deg);
`

const StatusIcon = styled(IconSlot)`
  margin-left: 16px;
`

/* ---------- the model, drawn in screen coordinates ---------- */
const z5 = (pts) => pts.map(([x, y]) => `${(590 + x / 2.178).toFixed(1)},${(300 + y / 3).toFixed(1)}`).join(' ')
const z6 = (pts) => pts.map(([x, y]) => `${(590 + x / 2.178).toFixed(1)},${(640 + y / 3).toFixed(1)}`).join(' ')

const holes = [
  [764.5, 360.7],
  [972, 330.7],
  [1167.6, 374],
  [1238, 466],
  [1142, 552],
  [935, 582],
  [668, 445],
]

const spots = [
  [764, 727],
  [1162, 740],
  [666, 812],
  [1230, 832],
  [1134, 917],
  [932, 947],
]

const shadowShape = [
  [70, 520], [100, 380], [200, 260], [350, 190], [500, 150], [900, 150], [1200, 190], [1330, 240],
  [1440, 350], [1490, 500], [1480, 620], [1400, 730], [1280, 810], [1100, 890], [900, 945], [700, 965],
  [520, 945], [380, 890], [280, 820], [130, 730], [80, 620],
]

const LINE = '#23252c'

const Model = () => (
  <Canvas width="1670" height="803" viewBox="32 175 1670 803">
    <defs>
      <linearGradient id="rim" x1="0" x2="1" y1="0" y2="0">
        <stop offset="0" stopColor="#3f414d" />
        <stop offset=".06" stopColor="#6a6c7c" />
        <stop offset=".3" stopColor="#9095aa" />
        <stop offset=".6" stopColor="#a8adc6" />
        <stop offset=".86" stopColor="#9a9eb5" />
        <stop offset=".97" stopColor="#7f818f" />
        <stop offset="1" stopColor="#6a6c78" />
      </linearGradient>
      <linearGradient id="cyl" x1="0" x2="1" y1="0" y2="0">
        <stop offset="0" stopColor="#494b58" />
        <stop offset=".22" stopColor="#7a7d90" />
        <stop offset=".5" stopColor="#9ea2ba" />
        <stop offset=".72" stopColor="#a8acc7" />
        <stop offset=".95" stopColor="#9195ad" />
        <stop offset="1" stopColor="#6a6c7a" />
      </linearGradient>
      <linearGradient id="hole" x1="0" x2="1" y1="0" y2="0">
        <stop offset="0" stopColor="#74778b" />
        <stop offset="1" stopColor="#bcc0da" />
      </linearGradient>
      <linearGradient id="filL" gradientUnits="userSpaceOnUse" x1="870" y1="805" x2="852" y2="842">
        <stop offset="0" stopColor="#9a9fba" />
        <stop offset=".45" stopColor="#dde3fb" />
        <stop offset="1" stopColor="#b9bfdf" />
      </linearGradient>
      <linearGradient id="filR" gradientUnits="userSpaceOnUse" x1="996" y1="797" x2="1014" y2="844">
        <stop offset="0" stopColor="#a6abc4" />
        <stop offset=".35" stopColor="#dfe5fb" />
        <stop offset=".7" stopColor="#f0f4ff" />
        <stop offset="1" stopColor="#f0f4ff" />
      </linearGradient>
      <linearGradient id="baseL" x1="0" x2="1" y1="0" y2="0">
        <stop offset="0" stopColor="#a3a7bc" />
        <stop offset="1" stopColor="#70737f" />
      </linearGradient>
      <filter id="soft" x="-10%" y="-10%" width="120%" height="120%">
        <feGaussianBlur stdDeviation="11" />
      </filter>
    </defs>

    <g filter="url(#soft)">
      <polygon points={z6(shadowShape)} fill="#414141" />
      {spots.map(([x, y]) => (
        <ellipse key={x} cx={x} cy={y} rx="20" ry="9" fill="#808080" />
      ))}
    </g>

    {/* neck */}
    <polygon points={z6([[512, 200], [708, 290], [708, 562], [512, 430]])} fill="#686b7c" stroke={LINE} strokeWidth="1.100" />
    <polygon points={z6([[708, 290], [1062, 200], [1062, 377], [708, 562]])} fill="#9fa3b7" stroke={LINE} strokeWidth="1.100" />

    {/* base flange */}
    <polygon points={z6([[465, 510], [685, 660], [685, 735], [465, 580]])} fill="url(#baseL)" stroke={LINE} strokeWidth="1.100" />
    <polygon points={z6([[685, 660], [705, 658], [765, 665], [765, 738], [720, 738], [685, 735]])} fill="#a0a4b8" stroke={LINE} strokeWidth="1.100" />
    <polygon points={z6([[765, 665], [1105, 478], [1105, 560], [765, 738]])} fill="#a3a7bb" stroke={LINE} strokeWidth="1.100" />
    <polygon points={z6([[512, 430], [708, 562], [708, 658], [685, 660], [465, 510], [467, 462], [505, 442]])} fill="url(#filL)" stroke={LINE} strokeWidth="1.100" />
    <polygon points={z6([[708, 562], [1062, 377], [1078, 418], [1108, 440], [1105, 478], [750, 665], [708, 658]])} fill="url(#filR)" stroke={LINE} strokeWidth="1.100" />
    <polyline points={z6([[745, 660], [1105, 468]])} stroke={LINE} strokeWidth="1" fill="none" />
    <polyline points={z6([[860, 592], [885, 590], [893, 578]])} stroke={LINE} strokeWidth=".6" fill="none" />
    <polyline points={z6([[938, 548], [962, 552], [973, 533]])} stroke={LINE} strokeWidth=".6" fill="none" />
    <polygon points={z6([[470, 462], [505, 445], [492, 470], [468, 486]])} fill="#eef3ff" stroke={LINE} strokeWidth=".8" />

    {/* lower cylinder */}
    <path d="M762 540V653A190 83 0 0 0 1142 653V540Z" fill="url(#cyl)" stroke={LINE} strokeWidth="1.200" />

    {/* flange rim and top face */}
    <path d="M627 456A326 144 0 0 0 1279 456V505A326 144 0 0 1 627 505Z" fill="url(#rim)" stroke={LINE} strokeWidth="1.200" />
    <ellipse cx="953" cy="456" rx="326" ry="144" fill="#d5dbf9" stroke={LINE} strokeWidth="1.200" />
    {holes.map(([x, y]) => (
      <ellipse key={x} cx={x} cy={y} rx="17.500" ry="8" fill="url(#hole)" stroke={LINE} strokeWidth="1.100" />
    ))}

    {/* rectangular duct */}
    <polygon points={z5([[110, 465], [805, 98], [1103, 305], [405, 680]])} fill="#d5dbf9" stroke={LINE} strokeWidth="1.200" />
    <polygon points={z5([[405, 680], [1103, 305], [1103, 488], [442, 835], [432, 842], [432, 985], [468, 1007], [405, 1035]])} fill="#a1a5bb" stroke={LINE} strokeWidth="1.100" />
    <polygon points={z5([[405, 680], [432, 668], [432, 1020], [405, 1035]])} fill="#afb3cb" />
    <polygon points={z5([[110, 465], [405, 680], [405, 1035], [108, 825]])} fill="#4d4f5b" stroke="#15161a" strokeWidth="1.200" />
    <polygon points={z5([[120, 494], [395, 688], [116, 822]])} fill="#a0a4ba" />
    <polygon points={z5([[116, 822], [395, 688], [390, 1015]])} fill="#d5dbf9" />

    {/* sketch preview */}
    <g stroke="#8e8e8e" fill="none">
      <polygon points={z5([[70, 403], [445, 662], [445, 1102], [68, 842]])} strokeWidth="1.700" />
      <polyline points={z5([[70, 403], [445, 1102]])} strokeWidth=".9" strokeDasharray="10 3 2 3" />
      <polyline points={z5([[68, 842], [445, 662]])} strokeWidth=".9" strokeDasharray="10 3 2 3" />
      <path d="M705 548l6 6M711 548l-6 6M708 546v10" strokeWidth=".8" />
    </g>
    {[[70, 403], [445, 662], [445, 1102], [68, 842]].map(([x, y]) => (
      <circle key={y} cx={590 + x / 2.178} cy={300 + y / 3} r="2.200" fill="#8e8e8e" />
    ))}

    {/* triad */}
    <g>
      <path d="M79 909V888" stroke="#176617" strokeWidth="5" />
      <path d="M79 876l-6 12h12z" fill="#2f8a2f" stroke="#0f4d0f" strokeWidth=".6" />
      <path d="M78 909L63 914" stroke="#16168f" strokeWidth="4.500" />
      <path d="M52 921l13-8 2 7z" fill="#2222d8" stroke="#101070" strokeWidth=".6" />
      <path d="M78 909L94 917" stroke="#8c1616" strokeWidth="4.500" />
      <path d="M105 921l-13-8-1 7z" fill="#e0201f" stroke="#7a1010" strokeWidth=".6" />
      <text x="79" y="874" textAnchor="middle" fontFamily="Liberation Sans, sans-serif" fontSize="11" fill="#0f7a0f">Y</text>
      <text x="47" y="926" textAnchor="middle" fontFamily="Liberation Sans, sans-serif" fontSize="12" fill="#1818e0">Z</text>
      <text x="107" y="928" textAnchor="middle" fontFamily="Liberation Sans, sans-serif" fontSize="12" fill="#ee1111">X</text>
    </g>
  </Canvas>
)

const DsMark = () => (
  <svg width="30" height="30" viewBox="0 0 30 30" fill="none" stroke="#c9252e" strokeWidth="2.200" strokeLinejoin="round" style={{ marginLeft: 5, flex: 'none' }}>
    <path d="M10 3c6-1 13 0 11 3-2 4-8 8-13 10l-6 11c5-1 9-3 11-5" />
    <path d="M30 14h-8c-3 0-4 3-1 5l3 2c3 2 1 6-3 6H12" />
  </svg>
)

const menuItems = [
  ['File', 36], ['Edit', 38], ['View', 46], ['Insert', 50], ['Tools', 47], ['Window', 67], ['Help', 60],
]

const viewTools = [
  ['zoomFit', 27], ['zoomArea', 29, true], ['prevView', 25],
]

const commandTabs = [
  ['Features', 75], ['Sketch', 66, true], ['Evaluate', 74], ['DimXpert', 82],
  ['SOLIDWORKS Add-Ins', 173, false, true], ['SOLIDWORKS MBD', 153, false, true],
]

const sketchTools = [
  ['line', true], ['circle', true], ['spline', true], ['dashBox', false],
  ['rect', true], ['arc', true], ['ellipse', true], ['textA', false],
  ['slot', true], ['polygon', false], ['fillet', 'off'], ['point', false],
]

const navGlyphs = ['M0 1h2v10H0zM9 1v10L3 6z', 'M8 1v10L2 6z', 'M2 1v10l6-5z', 'M8 1h2v10H8zM1 1v10l6-5z']
const railIcons = ['annNew', 'annEdit', 'annImport', 'annAdd', 'annLight', 'annSave', 'annFrame', 'annLink']
const paneIcons = ['home', 'books', 'folder', 'layout', 'ball', 'list', 'recover', 'sync', 'chat']

function App() {
  return (
    <Shell>
      <Global />

      <TitleBar>
        <LogoBox>
          <DsMark />
          <LogoWord>
            <b>SOLID</b>WORKS
          </LogoWord>
        </LogoBox>
        <MenuBar>
          <IconSlot $w={29} />
          {menuItems.map(([label, w]) => (
            <MenuItem key={label} $w={w}>{label}</MenuItem>
          ))}
          <IconSlot $w={16}><Ic n="pin" s={15} /></IconSlot>
        </MenuBar>
        <QuickBar>
          <IconSlot $w={20}><Ic n="newDoc" /></IconSlot>
          <Caret $w={19} />
          <IconSlot $w={20}><Ic n="open" /></IconSlot>
          <Caret $w={19} />
          <IconSlot $w={20}><Ic n="save" /></IconSlot>
          <Caret $w={20} />
          <IconSlot $w={20}><Ic n="print" /></IconSlot>
          <Caret $w={19} />
          <IconSlot $w={20}><Ic n="undo" /></IconSlot>
          <Caret $w={17} />
          <SelectBox>
            <SelectOn><Ic n="cursor" s={20} /></SelectOn>
            <SelectCaret $w={12} />
          </SelectBox>
          <IconSlot $w={22}><Ic n="light" /></IconSlot>
          <IconSlot $w={30}><Ic n="props" /></IconSlot>
          <IconSlot $w={24}><Ic n="gear" /></IconSlot>
          <Caret $w={16} />
        </QuickBar>
        <DocTitle>Part1.SLDPRT *</DocTitle>
        <SearchBox>
          <IconSlot $w={26}><Ic n="helpCircle" s={17} /></IconSlot>
          <SearchInput>Search SOLIDWORKS Help</SearchInput>
          <IconSlot $w={30}><Ic n="bigSearch" s={22} /></IconSlot>
          <Caret $off $w={16} />
        </SearchBox>
        <WinControls>
          <WinGlyph $w={11}>?</WinGlyph>
          <Caret $w={24} />
          <WinIcon kind="min" w={20} />
          <WinIcon kind="max" />
          <WinIcon kind="x" />
        </WinControls>
      </TitleBar>

      <ViewBar>
        <Grip />
        <ViewTools>
          {viewTools.map(([n, w, off]) => (
            <IconSlot key={n} $w={w} $off={off}><Ic n={n} /></IconSlot>
          ))}
          <ToolSep />
          <IconSlot $w={28} $off><Ic n="rebuild" /></IconSlot>
          <IconSlot $w={27}><Ic n="section" /></IconSlot>
          <IconSlot $w={28}><Ic n="cubeArrows" /></IconSlot>
          <Caret $w={20} />
          <IconSlot $w={26}><Ic n="cube" /></IconSlot>
          <Caret $w={20} />
          <IconSlot $w={26}><Ic n="eye" /></IconSlot>
          <Caret $w={20} />
          <IconSlot $w={26}><Ic n="appearance" /></IconSlot>
          <IconSlot $w={27}><Ic n="scene" /></IconSlot>
          <IconSlot $w={28}><Ic n="monitor" /></IconSlot>
          <Caret $w={24} />
        </ViewTools>
      </ViewBar>

      <Ribbon>
        <Cmd2 w={55} icon="sketch" lines={['Sketch']} caret />
        <Cmd2 w={110} icon="smartDim" lines={['Smart Dimension']} caret />
        <RibbonSep />
        <ToolGrid>
          {sketchTools.map(([n, caret]) => (
            <GridCell key={n}>
              <IconSlot $w={20} $off={caret === 'off'}><Ic n={n} /></IconSlot>
              {caret && <Caret $off={caret === 'off'} $w={18} />}
            </GridCell>
          ))}
        </ToolGrid>
        <RibbonSep />
        <Cmd2 w={80} icon="trim" lines={['Trim Entities']} off caret />
        <Cmd2 w={110} icon="convert" lines={['Convert Entities']} caret />
        <Cmd2 w={52} icon="offset" lines={['Offset', 'Entities']} off two />
        <Cmd2 w={72} icon="offsetSurface" lines={['Offset On', 'Surface']} two />
        <SmallList>
          <SmallRow>
            <RowIcon><Ic n="mirror" s={18} /></RowIcon>
            <RowText>Mirror Entities</RowText>
          </SmallRow>
          <SmallRow>
            <RowIcon><Ic n="linear" s={18} /></RowIcon>
            <RowText>Linear Sketch Pattern</RowText>
            <Caret $off $w={12} />
          </SmallRow>
          <SmallRow>
            <RowIcon><Ic n="move" s={18} /></RowIcon>
            <RowText>Move Entities</RowText>
            <Caret $off $w={12} />
          </SmallRow>
        </SmallList>
        <RibbonSep />
        <Cmd2 w={152} icon="relations" lines={['Display/Delete Relations']} off caret />
        <Cmd2 w={52} icon="repair" lines={['Repair', 'Sketch']} off two />
        <RibbonSep />
        <Cmd2 w={44} icon="quick" lines={['Qui...']} off caret />
        <RibbonSep />
        <Cmd2 w={49} icon="rapid" lines={['Rapid', 'Sketch']} two />
        <Cmd2 w={70} icon="instant" lines={['Instant2D']} on two />
        <Cmd2 w={98} icon="shaded" lines={['Shaded Sketch', 'Contours']} off two />
      </Ribbon>

      <Main>
        <Work>
          <TabRow>
            {commandTabs.map(([label, w, on, caps]) => (
              <CmTab key={label} $w={w} $on={on} $caps={caps}>{label}</CmTab>
            ))}
            <Hud>
              <IconSlot><Ic n="zoomFit" s={19} /></IconSlot>
              <IconSlot><Ic n="zoomArea" s={19} /></IconSlot>
              <IconSlot><Ic n="prevView" s={19} /></IconSlot>
              <IconSlot><Ic n="section" s={19} /></IconSlot>
              <IconSlot><Ic n="hudA" s={19} /></IconSlot>
              <IconSlot><Ic n="cubeArrows" s={19} /></IconSlot>
              <Caret $off />
              <IconSlot $w={28}><Ic n="cube" s={19} /></IconSlot>
              <Caret $off $w={10} />
              <IconSlot $w={30}><Ic n="eye" s={19} /></IconSlot>
              <Caret $off $w={10} />
              <IconSlot $w={32}><Ic n="appearance" s={19} /></IconSlot>
              <IconSlot $w={24}><Ic n="scene" s={19} /></IconSlot>
              <Caret $off $w={16} />
              <IconSlot $w={26}><Ic n="monitor" s={19} /></IconSlot>
              <Caret $off $w={12} />
            </Hud>
            <DocControls>
              <WinIcon kind="prev" c="#aaa" />
              <WinIcon kind="next" c="#aaa" />
              <WinIcon kind="min" c="#aaa" />
              <WinIcon kind="max" c="#aaa" />
              <WinIcon kind="x" c="#aaa" />
            </DocControls>
          </TabRow>

          <ViewRow>
            <FeatureRail>
              <RailGrip />
              <RailTools>
                {railIcons.map((n) => (
                  <RailIcon key={n} $on={n === 'annImport'}><Ic n={n} s={21} /></RailIcon>
                ))}
              </RailTools>
              <Handle />
            </FeatureRail>
            <Viewport>
              <Model />
              <PaneTabs>
                {paneIcons.map((n, i) => (
                  <PaneTab key={n} $on={n === 'recover'} $first={i === 0}>
                    <Ic n={n} s={20} />
                  </PaneTab>
                ))}
              </PaneTabs>
            </Viewport>
          </ViewRow>

          <BottomTabs>
            <NavButtons>
              {navGlyphs.map((d) => (
                <NavButton key={d}><NavGlyph d={d} /></NavButton>
              ))}
            </NavButtons>
            <ModelTab $w={76} $on>Model</ModelTab>
            <ModelTab $w={89}>3D Views</ModelTab>
            <ModelTab $w={145} $shift={12}>Motion Study 1</ModelTab>
          </BottomTabs>
        </Work>

        <Panel>
          <PanelInner>
            <PanelHead>
              <PanelChevrons>«</PanelChevrons>
              SOLIDWORKS Recovery
              <IconSlot $w={18}><Ic n="blackPin" s={16} /></IconSlot>
            </PanelHead>
            <SectionHead>
              Document Recovery
              <Chevron />
            </SectionHead>
            <Notice>
              SOLIDWORKS has recovered
              <br />
              the following files. Save the
              <br />
              ones you wish to keep.
            </Notice>
            <FileList>
              <FileRow>
                <IconSlot $w={22}><Ic n="part" s={18} /></IconSlot>
                Part2.SLDPRT [ Auto-saved
              </FileRow>
              <FileDate>5/28/2025 1:25 AM</FileDate>
              <HScroll $pad={23} $thumb={130} />
            </FileList>
            <OpenAll>Open All</OpenAll>
            <PanelFill />
            <HScroll $pad={22} $thumb={123} />
          </PanelInner>
        </Panel>
      </Main>

      <StatusBar>
        <StatusText>SOLIDWORKS Premium 2017 x64 Edition</StatusText>
        <StatusCell $w={7} />
        <StatusCell $w={87} $pad={4}>Editing Part</StatusCell>
        <StatusCell $w={16} />
        <StatusCell $w={197} $pad={38}>
          MMGS
          <UpCaret $w={56} />
          <StatusIcon $w={28}><Ic n="stamp" s={15} /></StatusIcon>
        </StatusCell>
      </StatusBar>
    </Shell>
  )
}

export default App
